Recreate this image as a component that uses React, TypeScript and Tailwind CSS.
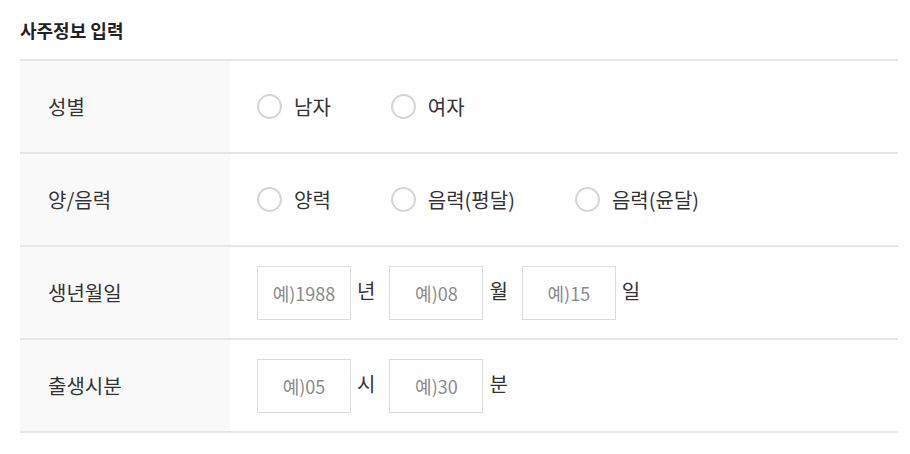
import React from 'react';

const font = { fontFamily: '"Noto Sans CJK KR", "Noto Sans", sans-serif' };

const Radio: React.FC<{ label: string; name: string }> = ({ label, name }) => (
    <label className="flex items-center mr-[60px] cursor-pointer">
        <input type="radio" name={name} className="peer sr-only" />
        <span className="w-[25px] h-[25px] rounded-full border-2 border-[#d6d6d6] bg-white" />
        <span className="ml-[12px] text-[20px] text-[#333]">{label}</span>
    </label>
);

const Field: React.FC<{ placeholder: string; unit: string }> = ({ placeholder, unit }) => (
    <div className="flex items-center">
        <input
            type="text"
            placeholder={placeholder}
            className="w-[94px] h-[54px] border border-[#dcdcdc] text-center text-[18px] text-[#333] placeholder:text-[#8a8a8a] outline-none"
        />
        <span className="ml-[6px] mr-[14px] text-[20px] text-[#333] -mt-[3px]">{unit}</span>
    </div>
);

const Row: React.FC<{ title: string; children: React.ReactNode }> = ({ title, children }) => (
    <div className="flex h-[93px] border-b-2 border-[#e6e6e6]">
        <div className="w-[210px] bg-[#f9f9f9] flex items-center pl-[28px] text-[20px] text-[#333]">{title}</div>
        <div className="flex-1 flex items-center pl-[27px]">{children}</div>
    </div>
);

export default function App() {
    return (
        <div className="w-[910px] h-[454px] bg-white px-[20px] pt-[17px]" style={font}>
            <h2 className="text-[18px] font-bold text-[#222] leading-[26px] mb-[16px]">사주정보 입력</h2>
            <div className="w-[878px] border-t-2 border-[#e6e6e6]">
                <Row title="성별">
                    <Radio name="gender" label="남자" />
                    <Radio name="gender" label="여자" />
                </Row>
                <Row title="양/음력">
                    <Radio name="cal" label="양력" />
                    <Radio name="cal" label="음력(평달)" />
                    <Radio name="cal" label="음력(윤달)" />
                </Row>
                <Row title="생년월일">
                    <Field placeholder="예)1988" unit="년" />
                    <Field placeholder="예)08" unit="월" />
                    <Field placeholder="예)15" unit="일" />
                </Row>
                <Row title="출생시분">
                    <Field placeholder="예)05" unit="시" />
                    <Field placeholder="예)30" unit="분" />
                </Row>
            </div>
        </div>
    );
}
